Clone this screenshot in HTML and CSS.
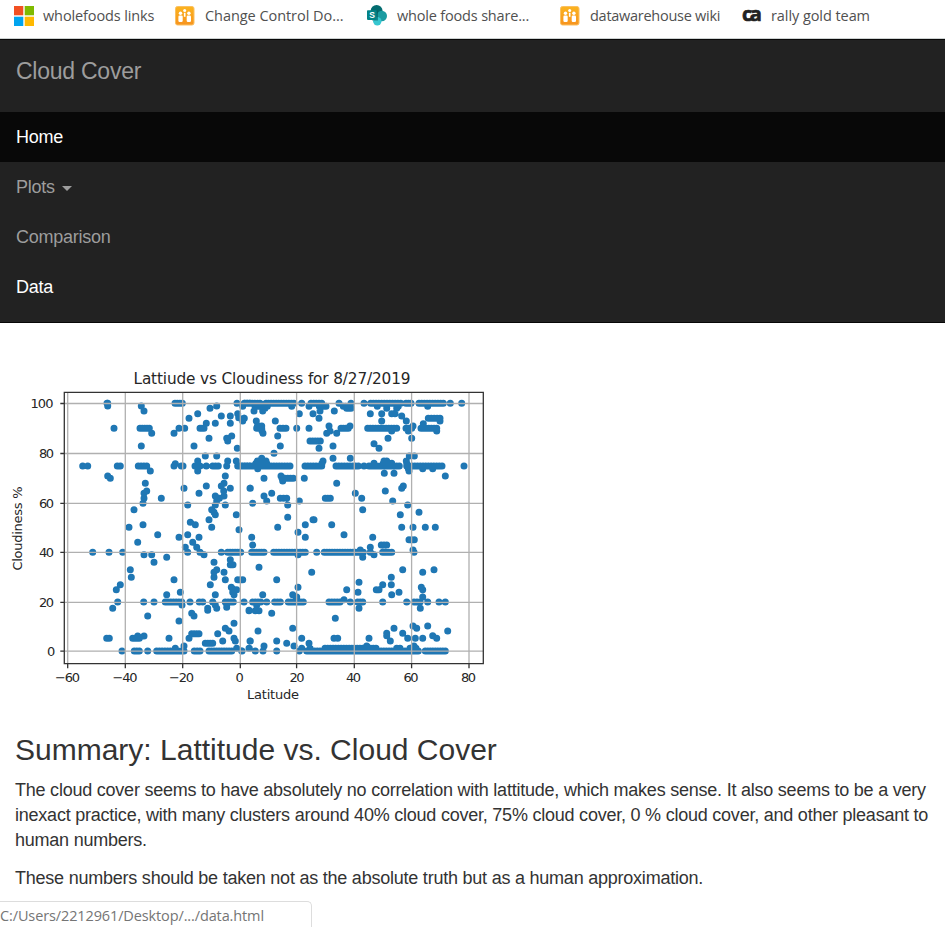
FILE: index.html
```
<!DOCTYPE html>
<html lang="en">
<head>
<meta charset="utf-8">
<title>Cloud Cover</title>
<link rel="stylesheet" href="styles.css">
</head>
<body>
<div class="bookmarks">
  <a class="bookmark links"><svg width="20" height="20" viewBox="0 0 20 20"><path fill="#f25022" d="M0 0h9.3v9.3H0z"/><path fill="#7fba00" d="M10.7 0H20v9.3h-9.3z"/><path fill="#00a4ef" d="M0 10.7h9.3V20H0z"/><path fill="#ffb900" d="M10.7 10.7H20V20h-9.3z"/></svg><span>wholefoods links</span></a>
  <a class="bookmark change"><svg width="20" height="20" viewBox="0 0 20 20"><use href="#people"/></svg><span>Change Control Do...</span></a>
  <a class="bookmark share"><svg width="20" height="21" viewBox="0 0 20 21"><circle cx="9.6" cy="6" r="6" fill="#036c70"/><circle cx="14.8" cy="11" r="5.2" fill="#1a9ba1"/><circle cx="10.3" cy="16.2" r="4.2" fill="#37c6d0"/><path d="M5 5.500h6v10H5z" fill="#035a5e" opacity=".6"/><rect y="5.200" width="9.700" height="9.700" rx=".8" fill="#038387"/><text x="2.200" y="13.300" class="icon-s">S</text></svg><span>whole foods share...</span></a>
  <a class="bookmark wiki"><svg width="20" height="20" viewBox="0 0 20 20"><defs><linearGradient id="amber" x2="0" y2="1"><stop stop-color="#fbb41f"/><stop offset="1" stop-color="#f7931e"/></linearGradient></defs><g id="people"><rect x=".5" y=".5" width="18.500" height="18.500" rx="2" fill="url(#amber)" stroke="#fbc060"/><g fill="#fff"><circle cx="9.700" cy="4.500" r="1.500"/><circle cx="5.500" cy="7.300" r="1.700"/><circle cx="13.900" cy="7.300" r="1.700"/><rect x="3.400" y="9.500" width="4.300" height="6.500" rx="1.200"/><rect x="11.700" y="9.500" width="4.300" height="6.500" rx="1.200"/><path d="M8.900 6.800h1.600v4h-1.600z"/></g></g></svg><span>datawarehouse wiki</span></a>
  <a class="bookmark rally"><b class="ca">ca</b><span>rally gold team</span></a>
</div>
<nav class="navbar">
  <a class="brand"><span>Cloud Cover</span></a>
  <ul class="menu">
    <li class="active"><span>Home</span></li>
    <li><span>Plots</span><i class="caret"></i></li>
    <li><span>Comparison</span></li>
    <li class="hover"><span>Data</span></li>
  </ul>
</nav>
<main>
  <svg class="chart" width="500" height="350" viewBox="0 365 500 350">
    <g id="points"></g>
    <path class="grid" d="M67.700 392.500v271M125.300 392.500v271M182.700 392.500v271M240.300 392.500v271M296.600 392.500v271M354.300 392.500v271M411.600 392.500v271M469 392.500v271M64.300 403.500h419M64.300 453.500h419M64.300 503.400h419M64.300 552.400h419M64.300 602.300h419M64.300 651.200h419"/>
    <path class="axis" d="M64.300 392.300H483.300V663.700H64.300zM67.700 663.700v4.500M125.300 663.700v4.500M182.700 663.700v4.500M240.300 663.700v4.500M296.600 663.700v4.500M354.300 663.700v4.500M411.600 663.700v4.500M469 663.700v4.500M64.300 403.500h-4M64.300 453.500h-4M64.300 503.400h-4M64.300 552.400h-4M64.300 602.300h-4M64.300 651.200h-4"/>
    <g class="label">
      <text class="title" x="133.500" y="384.300" textLength="277">Lattiude vs Cloudiness for 8/27/2019</text>
      <text x="30.500" y="408" textLength="23">100</text>
      <text x="39" y="458" textLength="15">80</text>
      <text x="39" y="508" textLength="15">60</text>
      <text x="39" y="557" textLength="15">40</text>
      <text x="39" y="607" textLength="15">20</text>
      <text x="47" y="655.700">0</text>
      <text x="55" y="682" textLength="25">−60</text>
      <text x="112.500" y="682" textLength="25">−40</text>
      <text x="169" y="682" textLength="25">−20</text>
      <text x="235.500" y="682">0</text>
      <text x="289.500" y="682" textLength="15">20</text>
      <text x="346" y="682" textLength="15">40</text>
      <text x="403.500" y="682" textLength="15">60</text>
      <text x="461" y="682" textLength="15">80</text>
      <text x="247" y="699" textLength="52">Latitude</text>
      <text transform="translate(22 570.500) rotate(-90)" textLength="84">Cloudiness %</text>
    </g>
  </svg>
  <h2><span>Summary: Lattitude vs. Cloud Cover</span></h2>
  <p>The cloud cover seems to have absolutely no correlation with lattitude, which makes sense. It also seems to be a very<br>inexact practice, with many clusters around 40% cloud cover, 75% cloud cover, 0 % cloud cover, and other pleasant to<br>human numbers.</p>
  <p>These numbers should be taken not as the absolute truth but as a human approximation.</p>
</main>
<div class="status">C:/Users/2212961/Desktop/.../data.html</div>
<script src="chart.js"></script>
</body>
</html>
```
FILE: styles.css
```
* { box-sizing: border-box; }
body {
  margin: 0;
  height: 927px;
  overflow: hidden;
  background: #fff;
  color: #333;
  font: 18px/25px "Liberation Sans", Arial, sans-serif;
}
.bookmarks {
  display: flex;
  height: 39px;
  padding: 0 0 7px 14px;
  border-bottom: 1px solid #cdd2d2;
  font: 14.5px/20px "Open Sans", "Noto Sans", sans-serif;
  color: #505050;
}
.bookmark { display: flex; align-items: center; flex: none; white-space: nowrap; }
.bookmark svg { flex: none; }
.links { width: 161px; gap: 9px; letter-spacing: -0.12px; }
.change { width: 192px; gap: 10px; letter-spacing: -0.05px; }
.share { width: 193px; gap: 10px; letter-spacing: -0.18px; }
.wiki { width: 182px; gap: 10px; letter-spacing: -0.27px; }
.rally { gap: 11px; letter-spacing: -0.07px; }
.ca {
  width: 18px;
  padding-bottom: 3px;
  font: 700 20px/20px "Open Sans", sans-serif;
  letter-spacing: -2.5px;
  color: #222;
  -webkit-text-stroke: 0.7px #222;
}
.icon-s { font: bold 8.5px "Liberation Sans", sans-serif; fill: #fff; }
.navbar {
  height: 284px;
  background: #222;
  border-top: 1px solid #080808;
  border-bottom: 1px solid #080808;
  color: #9d9d9d;
}
.brand { display: block; height: 72px; padding: 19px 16px; font-size: 23px; letter-spacing: -0.25px; }
.menu { margin: 0; padding: 0; list-style: none; letter-spacing: -0.26px; }
.menu li { display: flex; align-items: center; height: 50px; padding: 0 16px; }
.menu .active { background: #080808; color: #fff; }
.menu .hover { color: #fff; }
.caret {
  margin: 3px 0 0 7px;
  border-top: 5px solid;
  border-left: 5px solid transparent;
  border-right: 5px solid transparent;
}
main { padding-top: 42px; }
.chart { display: block; }
.grid { fill: none; stroke: #b0b0b0; stroke-width: 1.3; }
.axis { fill: none; stroke: #333; stroke-width: 1.3; }
.dots { fill: none; stroke: #1f77b4; stroke-width: 7; stroke-linecap: round; }
.label { font: 13px "DejaVu Sans", sans-serif; fill: #262626; }
.title { font-size: 15.3px; }
h2 { margin: 17px 15px 11px; font-size: 30px; line-height: 35px; font-weight: 400; }
p { margin: 0 15px 13px; white-space: nowrap; letter-spacing: -0.228px; }
.status {
  position: absolute;
  left: 0;
  bottom: 0;
  width: 312px;
  height: 26px;
  border: 1px solid #ddd;
  border-width: 1px 1px 0 0;
  border-radius: 0 5px 0 0;
  background: #fff;
  color: #757575;
  font: 14.5px/28px "Open Sans", "Noto Sans", sans-serif;
  letter-spacing: -0.12px;
}
```
FILE: chart.js
```
// Each tile has an origin and rows of "y:x,x,from-to" in thirds of a pixel.
const tiles = [
  [0, 365, `115:321,323,525-547,711,735-750;123:323,424,650,728;138:432;130:630;146:593,713;160:567,733;153:664,691;158:716;168:728;175:619,646,691;190:342,420-448,537,554,600-612;205:455,522;243:424,582;220:627,680;213:695;228:683;250:712;273:616,650;288:593,683,709;303:248,263,352,361,415-440,522,544-549,585-600,619,638-655,680,713-750;296:526;318:451,593;333:323,676;340:331;355:436,672;363:619,664;370:552,691,750;378:440,671;385:432,597`],
  [240, 365, `115:13-60,78-162,185,213-245,297,333,372,392-482,498-513,537-610,631,665;124:8,45-82,155,207,238-258,310-330,412,440,475,563;130:75,320-333,440,470;138:42,68,240,283;146:178,219,391,425,455-465;160:12,237,565-600;153:485;168:8,49,106,425,499,600;176:550;183:52-65,267,330,519;190:50-65,120-138,170,207,303-325,383-470,498-515,543-590;198:66,270,455,505,590;205:69,260,290;213:113;220:444,515;228:210-241;236:402;243:121,279;250:237,417;265:102;273:508,523;280:65,279,331;288:52-78,249,432-440,499;295:48-80,246,402,430-455,500;303:5-150,195-245,288-355,372,387-478,500-606,672;311:53,505,548,578;318:507;325:433,462;333:616,123;340:72,126-160,193;348:128;355:290;370:31,485;363:490;378:436;385:95,346`],
  [0, 485, `33:646,672;40:432,484,650-658;48:650;55:429;60:563,646,676;74:402,635;82:642;89:646,709;104:627;112:571;119:429,586;127:387,635;134:717;149:473,563;157:537,597;172:413,578;187:556,590;202:278,327,368,563,600,664,683-720;209:432,455,612;217:500;232:462,642;224:691;239:691-699;254:391,650;262:642,672;277:394,642;284:522,676,713-728;299:361,631;307:694;314:349,698-710;322:541,698;329:500,646`],
  [240, 485, `33:72;40:121-140,256-271,365;48:80,178,458;55:38;60:143,503;74:368;82:537;89:481;97:143;104:219-222;119:196,275;127:113,485,519,556,586;142:174;149:312;157:35,196,398;164:507-523;180:38,424-440;187:391;195:361,519;202:2,35-72,101-196,230,253-370,391,428-455,522;209:174,402;217:368;247:57;254:488,582;262:215,548;277:454;284:8,110;292:357;299:428,454;307:174,544;314:320,409-417,548;322:354,477;329:68,158,455`],
  [0, 585, `29:702;51:353,431,462,496-545,570,598-608,638,676-700,732;60:546,646,680;70:338,623,650;67:680;76:623,747;85:575;93:443,582;108:537;115:702;130:676;138:687;146:575-597,653;153:413,432;160:398-418,320-328,507,567,702;168:668,706,750;175:616-638;183:552;190:526,710,747;198:366,403-418,443,470-552,583-600,627-695,725`],
  [240, 585, `36:170,548;51:12,38-62,80,104-121,145-190,267-300,331,353-368,428,500,522-540,563,597,616;44:312;60:50;70:357,541;77:27,46-57;85:95;100:286;123:519,563;130:158,462,530;138:54,623;145:440,488;152:440,578;160:185,282-293,387,503,526,548,590;168:31,110,451;175:140,207;183:72,162,380,522;190:28,185,210,255-408,470-480,510-528;198:6,46,69,110,178,200-535,556-616`]
];

let d = "";
for (const [left, top, rows] of tiles) {
  for (const row of rows.split(";")) {
    const [y, xs] = row.split(":");
    for (const run of xs.split(",")) {
      const [from, to = from] = run.split("-").map(Number);
      const steps = Math.max(1, Math.round((to - from) / 8));
      for (let i = 0; i <= (to > from ? steps : 0); i++) {
        const x = from + (to - from) * i / steps;
        d += `M${(left + x / 3).toFixed(1)} ${(top + y / 3).toFixed(1)}h.01`;
      }
    }
  }
}
document.getElementById("points").innerHTML = `<path class="dots" d="${d}"/>`;
```
